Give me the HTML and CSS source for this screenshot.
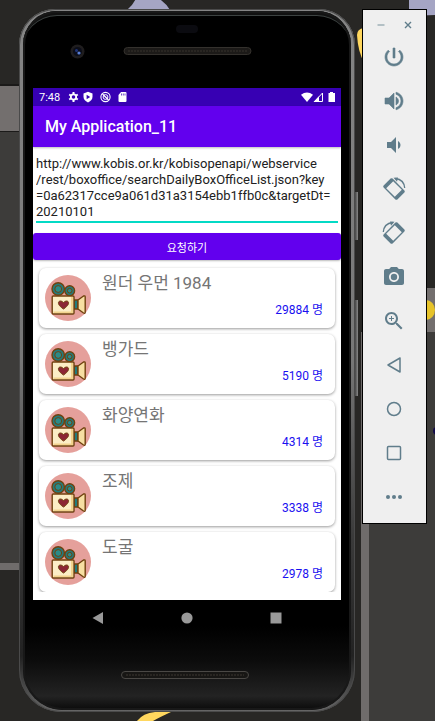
FILE: index.html
```html
<!DOCTYPE html>
<html lang="ko">
<head>
<meta charset="utf-8">
<meta name="viewport" content="width=device-width, initial-scale=1">
<title>My Application_11</title>
<link rel="stylesheet" href="styles.css">
</head>
<body>
<svg class="wallpaper" viewBox="0 0 435 721" preserveAspectRatio="none" aria-hidden="true">
  <rect width="435" height="721" fill="#282725"/>
  <rect y="84" width="30" height="48" fill="#1b1a19"/>
  <rect y="86" width="30" height="45" fill="#736f6e"/>
  <rect y="132" width="30" height="431" fill="#3d3c3a"/>
  <rect y="563" width="30" height="7" fill="#6f6c6b"/>
  <path d="M127 10Q134 4 136-2H158Q166 3 170 10z" fill="#a5a5c4"/>
  <path d="M409 0H435V15L409 16z" fill="#a5a5c4"/>
  <path d="M364 28Q357 29 357 35Q358 52 364 62z" fill="#ffd75e"/>
  <rect x="420" y="288" width="15" height="44" fill="#736f6e"/>
  <ellipse cx="426" cy="310" rx="9" ry="10" fill="#e6c32a"/>
  <rect x="369" y="332" width="66" height="389" fill="#3d3c3a"/>
  <circle cx="437" cy="431" r="4" fill="#120a4a"/>
  <rect x="361" y="332" width="8" height="389" fill="#6f6c6b"/>
  <path d="M137 721Q143 713 155 712H171Q160 717 153 721z" fill="#ffd75e"/>
</svg>

<svg class="sprite" aria-hidden="true">
  <symbol id="movie-camera" viewBox="0 0 46 46">
    <circle cx="23" cy="23" r="23" fill="#e5a09b"/>
    <g stroke="#70410f" stroke-width="1.4" stroke-linejoin="round">
      <circle cx="13.2" cy="14" r="6.2" fill="#237b7c"/>
      <circle cx="24.7" cy="15.7" r="4.9" fill="#237b7c"/>
      <circle cx="13.2" cy="14" r="3.4" fill="#2a8b89" stroke-width="1"/>
      <circle cx="24.7" cy="15.7" r="2.3" fill="#2a8b89" stroke-width="1"/>
      <path d="M29 25h4v9h-4z" fill="#237b7c"/>
      <path d="M33 25l5.500-4q1.700-.6 1.700 1v15q0 2-1.700 1L33 34z" fill="#f7dfa2"/>
      <rect x="7.200" y="21" width="21.800" height="18" rx="1" fill="#fcedc6"/>
    </g>
    <path d="M8.500 38V36.500H26V22h2v16z" fill="#f2d38d"/>
    <path d="M18.500 34c-7-4.500-5.500-8-3-8q2 0 3 1.800q1-1.800 3-1.800c2.500 0 4 3.500-3 8z" fill="#8c2635" stroke="#70410f"/>
  </symbol>
</svg>

<main class="phone">
  <span class="side-key side-key-power"></span>
  <span class="side-key side-key-volume"></span>
  <div class="face">
    <svg class="hardware-top" viewBox="0 0 308 77" aria-hidden="true">
      <rect x="143" y="14" width="22" height="8" rx="4" fill="#0b0b10"/>
      <circle cx="44.500" cy="40.500" r="7" fill="#1f1d1e"/>
      <circle cx="44.500" cy="40.500" r="4.500" fill="#0b0d18"/>
      <circle cx="43.500" cy="39.500" r="1.500" fill="#1f3478"/>
      <circle cx="46" cy="42" r="1.600" fill="#5a7fd6"/>
      <rect x="91" y="36.500" width="127" height="7" rx="3.500" fill="#1c1a18" stroke="#34312d"/>
      <path d="M95 40h119" stroke="#292622" stroke-width="2" stroke-dasharray="2 1"/>
    </svg>

    <div class="screen">
      <div class="status-bar">
        <time>7:48</time>
        <svg class="status-icons" viewBox="0 0 59 12" aria-hidden="true">
          <g fill="none" stroke="#fff">
            <circle cx="5.500" cy="6" r="2.700" stroke-width="1.800"/>
            <path d="M5.500 1v2M5.500 9v2M1.200 3.500l1.700 1M8.100 7.500l1.700 1M1.200 8.500l1.700-1M8.100 4.500l1.700-1" stroke-width="2"/>
            <circle cx="37.500" cy="6" r="4.600" stroke-width="1.100"/>
            <circle cx="37.500" cy="6" r="2.400"/>
            <path d="M34.500 3l6 6" stroke-width="1.200"/>
          </g>
          <path d="M20 .8l4.500 1.800v3.200q0 3.700-4.500 5.600q-4.500-1.900-4.500-5.600V2.600z" fill="#fff"/>
          <path d="M18.600 3.800l3.600 2.200l-3.600 2.200z" fill="#3700b3"/>
          <path d="M53 1h4.500q1 0 1 1v8q0 1-1 1h-6q-1 0-1-1V4z" fill="#fff"/>
          <path d="M53.500 2.500v2M55.300 2.500v2M57 2.500v2" stroke="#3700b3" stroke-width=".7"/>
        </svg>
        <svg class="signal-icons" viewBox="0 0 34 12" aria-hidden="true">
          <path d="M0 3.800Q6-1 12 3.800L6 11z" fill="#fff"/>
          <path d="M13.500 10.500L21.500 2v8.500z" fill="none" stroke="#fff"/>
          <path d="M12.500 11L18 5.200V11z" fill="#fff"/>
          <path d="M29 1h3v1h2v9h-6.500V2H29z" fill="#fff"/>
        </svg>
      </div>
      <header class="app-bar"><h1>My Application_11</h1></header>
      <form class="request">
        <textarea rows="4" aria-label="URL" spellcheck="false">http://www.kobis.or.kr/kobisopenapi/webservice
/rest/boxoffice/searchDailyBoxOfficeList.json?key
=0a62317cce9a061d31a3154ebb1ffb0c&amp;targetDt=
20210101</textarea>
        <button type="button">요청하기</button>
      </form>
      <ul class="movies">
        <li class="movie"><svg class="poster" aria-hidden="true"><use href="#movie-camera"/></svg><h2>원더 우먼 1984</h2><p>29884 명</p></li>
        <li class="movie"><svg class="poster" aria-hidden="true"><use href="#movie-camera"/></svg><h2>뱅가드</h2><p>5190 명</p></li>
        <li class="movie"><svg class="poster" aria-hidden="true"><use href="#movie-camera"/></svg><h2>화양연화</h2><p>4314 명</p></li>
        <li class="movie"><svg class="poster" aria-hidden="true"><use href="#movie-camera"/></svg><h2>조제</h2><p>3338 명</p></li>
        <li class="movie"><svg class="poster" aria-hidden="true"><use href="#movie-camera"/></svg><h2>도굴</h2><p>2978 명</p></li>
      </ul>
    </div>

    <nav class="nav-bar">
      <button type="button" aria-label="Back"><svg viewBox="0 0 12 12"><path d="M11 0v12L.5 6z"/></svg></button>
      <button type="button" aria-label="Home"><svg viewBox="0 0 12 12"><circle cx="6" cy="6" r="5.600"/></svg></button>
      <button type="button" aria-label="Overview"><svg viewBox="0 0 12 12"><path d="M.5.5h11v11H.5z"/></svg></button>
    </nav>
    <svg class="hardware-bottom" viewBox="0 0 308 73" aria-hidden="true">
      <rect x="88.500" y="35.500" width="127" height="7" rx="3.500" fill="#171614" stroke="#4a4845"/>
      <path d="M93 39h118" stroke="#292622" stroke-width="2" stroke-dasharray="2 1"/>
    </svg>
  </div>
</main>

<aside class="toolbar">
  <div class="window-controls">
    <button type="button" aria-label="Minimize"><svg viewBox="0 0 10 10"><path d="M1.500 5h7" stroke="#9fb0b7" stroke-width="1.500"/></svg></button>
    <button type="button" aria-label="Close"><svg viewBox="0 0 10 10"><path d="M2 2l6 6M8 2L2 8" stroke="#607d8b" stroke-width="1.400"/></svg></button>
  </div>
  <button class="tool tool-bold" type="button" aria-label="Power"><svg viewBox="0 0 24 24"><path d="M13 3h-2v10h2V3zm4.830 2.170l-1.420 1.420C17.990 7.860 19 9.810 19 12c0 3.870-3.130 7-7 7s-7-3.130-7-7c0-2.190 1.010-4.140 2.580-5.420L6.170 5.170C4.230 6.820 3 9.260 3 12c0 4.970 4.030 9 9 9s9-4.030 9-9c0-2.740-1.230-5.180-3.170-6.830z"/></svg></button>
  <button class="tool tool-bold" type="button" aria-label="Volume up"><svg viewBox="0 0 24 24"><path d="M3 9v6h4l5 5V4L7 9H3zm13.500 3c0-1.770-1.020-3.290-2.500-4.030v8.050c1.480-.73 2.500-2.250 2.500-4.020zM14 3.230v2.060c2.890.86 5 3.540 5 6.710s-2.110 5.850-5 6.710v2.060c4.010-.91 7-4.490 7-8.770s-2.990-7.860-7-8.770z"/></svg></button>
  <button class="tool" type="button" aria-label="Volume down"><svg viewBox="0 0 24 24"><path d="M18.500 12c0-1.770-1.020-3.290-2.500-4.030v8.050c1.480-.73 2.500-2.250 2.500-4.020zM5 9v6h4l5 5V4L9 9H5z"/></svg></button>
  <button class="tool" type="button" aria-label="Rotate left"><svg viewBox="0 0 24 24"><path fill-rule="evenodd" d="M8.600 1.600q1-.9 2 0L22.400 13.400q.9 1 0 2L15.400 22.400q-1 .9-2 0L1.600 10.600q-.9-1 0-2zM11.200 4.200L4.200 11.200L12.800 19.800L19.800 12.800z"/><path d="M13.500 1.500Q22 2.500 22.700 11" fill="none" stroke="#607d8b" stroke-width="1.300"/><path d="M11.500.7L16 .6L15 4.700z"/></svg></button>
  <button class="tool" type="button" aria-label="Rotate right"><svg viewBox="0 0 24 24"><g transform="matrix(-1 0 0 1 24 0)"><path fill-rule="evenodd" d="M8.600 1.600q1-.9 2 0L22.400 13.400q.9 1 0 2L15.400 22.400q-1 .9-2 0L1.600 10.600q-.9-1 0-2zM11.200 4.200L4.200 11.200L12.800 19.800L19.800 12.800z"/><path d="M13.500 1.500Q22 2.500 22.700 11" fill="none" stroke="#607d8b" stroke-width="1.300"/><path d="M11.500.7L16 .6L15 4.700z"/></g></svg></button>
  <button class="tool" type="button" aria-label="Screenshot"><svg viewBox="0 0 24 24"><circle cx="12" cy="12" r="3.200"/><path d="M9 2L7.170 4H4c-1.100 0-2 .9-2 2v12c0 1.100.9 2 2 2h16c1.100 0 2-.9 2-2V6c0-1.100-.9-2-2-2h-3.170L15 2H9zm3 15c-2.760 0-5-2.240-5-5s2.240-5 5-5 5 2.240 5 5-2.240 5-5 5z"/></svg></button>
  <button class="tool" type="button" aria-label="Zoom"><svg viewBox="0 0 24 24"><path d="M15.500 14h-.79l-.28-.27C15.410 12.590 16 11.110 16 9.500 16 5.910 13.090 3 9.500 3S3 5.910 3 9.500 5.910 16 9.500 16c1.610 0 3.090-.59 4.230-1.570l.27.28v.79l5 4.990L20.490 19l-4.990-5zm-6 0C7.010 14 5 11.990 5 9.500S7.010 5 9.500 5 14 7.010 14 9.500 11.990 14 9.500 14zm2.500-4h-2v2H9v-2H7V9h2V7h1v2h2v1z"/></svg></button>
  <button class="tool tool-outline" type="button" aria-label="Back"><svg viewBox="0 0 24 24"><path d="M18 5v14L6 12z"/></svg></button>
  <button class="tool tool-outline" type="button" aria-label="Home"><svg viewBox="0 0 24 24"><circle cx="12" cy="12" r="6.500"/></svg></button>
  <button class="tool tool-outline" type="button" aria-label="Overview"><svg viewBox="0 0 24 24"><rect x="5.500" y="5.500" width="13" height="13" rx="1"/></svg></button>
  <button class="tool" type="button" aria-label="More"><svg viewBox="0 0 24 24"><circle cx="6" cy="12" r="2"/><circle cx="12" cy="12" r="2"/><circle cx="18" cy="12" r="2"/></svg></button>
</aside>
</body>
</html>
```

FILE: styles.css
```css
* {
  box-sizing: border-box;
}

body {
  display: flex;
  align-items: flex-start;
  gap: 7px;
  margin: 0;
  padding: 9px 8px 9px 19px;
  background: #282725;
  font-family: Roboto, "Noto Sans CJK KR", sans-serif;
}

h1, h2, p, ul {
  margin: 0;
  padding: 0;
}

button {
  padding: 0;
  border: 0;
  background: none;
  font: inherit;
}

svg {
  display: block;
}

.wallpaper {
  position: absolute;
  inset: 0;
  z-index: -1;
  width: 100%;
  height: 100%;
}

.sprite {
  position: absolute;
  width: 0;
  height: 0;
}

/* Phone body */
.phone {
  position: relative;
  flex: 1;
  min-width: 0;
  padding: 2px 4px;
  border-radius: 36px 36px 42px 42px;
  background: linear-gradient(#858585, #777 50%, #3a3a3a 75%, #222 92%, #666);
  box-shadow: inset 0 0 0 1px #4a4a4a;
}

.face {
  padding: 0 10px 1px;
  border-radius: 34px 34px 40px 40px;
  background: linear-gradient(#000 88%, #0c0c0c 93%, #232323 98%, #0a0a0a);
  box-shadow: inset 0 0 0 2px #181818, inset 0 5px 0 -1px #111, inset 0 6px 0 -1px #3c4241;
}

.side-key {
  position: absolute;
  right: -3px;
  width: 3px;
  background: linear-gradient(90deg, #444, #8a8a8a);
}

.side-key-power {
  top: 183px;
  height: 48px;
}

.side-key-volume {
  top: 291px;
  height: 96px;
}

.hardware-top,
.hardware-bottom {
  width: 100%;
}

/* App screen */
.screen {
  padding-bottom: 8px;
  background: #fff;
}

.status-bar {
  display: flex;
  align-items: center;
  height: 18px;
  padding: 0 6px;
  background: #3700b3;
  color: #fff;
  font-size: 11px;
}

.status-icons {
  width: 59px;
  height: 12px;
  margin-left: 8px;
}

.signal-icons {
  width: 34px;
  height: 12px;
  margin-left: auto;
}

.app-bar {
  display: flex;
  align-items: center;
  height: 41px;
  padding: 0 12px;
  background: #6200ee;
  color: #fff;
  box-shadow: 0 1px 2px #0004;
}

.app-bar h1 {
  font-size: 16px;
  font-weight: 500;
}

.request {
  padding-top: 9px;
}

.request textarea {
  display: block;
  width: calc(100% - 6px);
  margin: 0 3px 10px;
  padding: 0 0 1px;
  border: 0;
  border-bottom: 2px solid #03dac5;
  outline: 0;
  resize: none;
  overflow: hidden;
  background: none;
  color: #212121;
  font: 13px/16px Roboto, sans-serif;
  white-space: pre;
}

.request button {
  display: block;
  width: 100%;
  height: 27px;
  border-radius: 3px;
  background: #6200ee;
  color: #fff;
  font-size: 11px;
  box-shadow: 0 1px 2px #0004;
}

.movies {
  display: grid;
  gap: 6px;
  padding: 8px 6px 0;
  overflow: hidden;
  list-style: none;
}

.movie {
  display: grid;
  grid-template-columns: 46px 1fr;
  grid-template-rows: 30px 30px;
  column-gap: 11px;
  padding: 0 12px 0 6px;
  border-radius: 7px;
  background: #fff;
  box-shadow: 0 1px 3px #0006;
}

.poster {
  grid-row: span 2;
  align-self: center;
  width: 46px;
  height: 46px;
}

.movie h2 {
  color: #757575;
  font-size: 17px;
  font-weight: 400;
  line-height: 30px;
}

.movie p {
  color: #1a10f0;
  font-size: 12px;
  line-height: 24px;
  text-align: right;
}

/* Android navigation */
.nav-bar {
  display: flex;
  justify-content: center;
  height: 36px;
}

.nav-bar button {
  display: grid;
  place-items: center;
  width: 89px;
}

.nav-bar svg {
  width: 12px;
  height: 12px;
  fill: #999;
}

/* Emulator toolbar */
.toolbar {
  width: 65px;
  padding: 0 1px 4px 0;
  border: 1px solid #000;
  background: #efefef;
}

.window-controls {
  display: flex;
  justify-content: center;
  gap: 17px;
  height: 25px;
  padding-top: 4px;
}

.window-controls svg {
  width: 10px;
  height: 10px;
}

.tool {
  display: grid;
  place-items: center;
  width: 100%;
  height: 44px;
}

.tool svg {
  width: 24px;
  height: 24px;
  fill: #607d8b;
}

.tool-bold svg {
  stroke: #607d8b;
  stroke-width: 0.6;
}

.tool-outline svg {
  fill: none;
  stroke: #607d8b;
  stroke-width: 1.5;
  stroke-linejoin: round;
}
```
